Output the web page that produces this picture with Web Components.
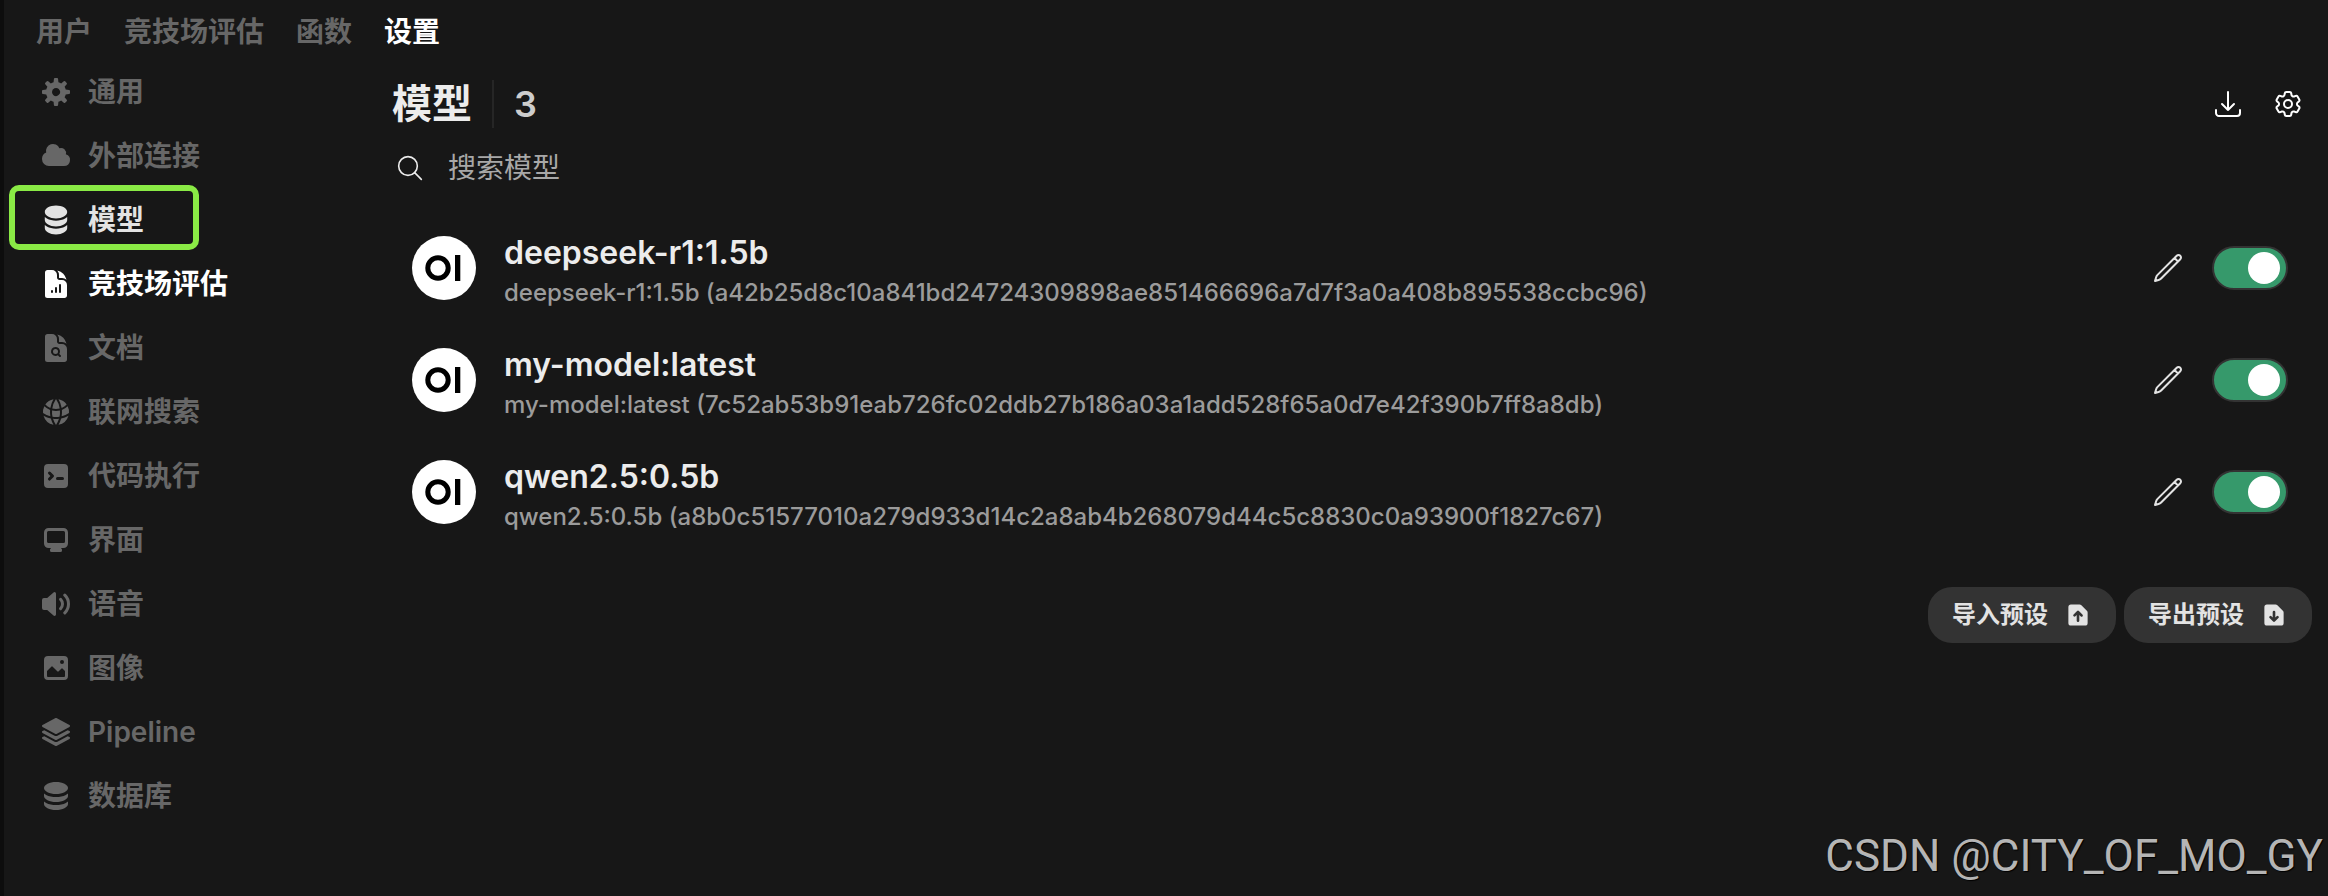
<!DOCTYPE html>
<html lang="zh-CN">
<head>
<meta charset="utf-8">
<title>设置</title>
<style>
	body {
		margin: 0;
		background: #171717;
		color: #ececec;
		font-family: Inter, "Noto Sans CJK SC", sans-serif;
		font-size: 28px;
		line-height: 40px;
	}
</style>
</head>
<body>

<admin-page>
	<top-nav slot="nav">
		<nav-tab>用户</nav-tab>
		<nav-tab>竞技场评估</nav-tab>
		<nav-tab>函数</nav-tab>
		<nav-tab active>设置</nav-tab>
	</top-nav>

	<side-nav slot="side">
		<side-item icon="cog">通用</side-item>
		<side-item icon="cloud">外部连接</side-item>
		<side-item icon="stack" active marked>模型</side-item>
		<side-item icon="chart" hover>竞技场评估</side-item>
		<side-item icon="doc">文档</side-item>
		<side-item icon="globe">联网搜索</side-item>
		<side-item icon="code">代码执行</side-item>
		<side-item icon="screen">界面</side-item>
		<side-item icon="audio">语音</side-item>
		<side-item icon="image">图像</side-item>
		<side-item icon="layers">Pipeline</side-item>
		<side-item icon="database">数据库</side-item>
	</side-nav>

	<panel-header count="3">模型</panel-header>
	<search-box placeholder="搜索模型"></search-box>
	<model-list>
		<model-row name="deepseek-r1:1.5b" digest="a42b25d8c10a841bd24724309898ae851466696a7d7f3a0a408b895538ccbc96"></model-row>
		<model-row name="my-model:latest" digest="7c52ab53b91eab726fc02ddb27b186a03a1add528f65a0d7e42f390b7ff8a8db"></model-row>
		<model-row name="qwen2.5:0.5b" digest="a8b0c51577010a279d933d14c2a8ab4b268079d44c5c8830c0a93900f1827c67"></model-row>
	</model-list>
	<preset-actions>
		<pill-button icon="upload">导入预设</pill-button>
		<pill-button icon="export">导出预设</pill-button>
	</preset-actions>

	<page-watermark slot="mark">CSDN @CITY_OF_MO_GY</page-watermark>
</admin-page>

<script>
const docBody = 'M5.625 1.5H9a3.75 3.75 0 0 1 3.75 3.75v1.875c0 1.036.84 1.875 1.875 1.875H16.5a3.75 3.75 0 0 1 3.75 3.75v7.875c0 1.035-.84 1.875-1.875 1.875H5.625a1.875 1.875 0 0 1-1.875-1.875V3.375c0-1.036.84-1.875 1.875-1.875Z'
const docFold = 'M14.25 5.25a5.23 5.23 0 0 0-1.279-3.434 9.768 9.768 0 0 1 6.963 6.963A5.23 5.23 0 0 0 16.5 7.5h-1.875a.375.375 0 0 1-.375-.375V5.25Z'
const fileBody = 'M4 2a1.5 1.5 0 0 0-1.5 1.5v9A1.5 1.5 0 0 0 4 14h8a1.5 1.5 0 0 0 1.5-1.5V6.621a1.5 1.5 0 0 0-.44-1.06L9.94 2.439A1.5 1.5 0 0 0 8.878 2H4Z'

// [viewBox size, shapes]
const solid = {
	cog: [16, '<path d="M6.955 1.45A.5.5 0 0 1 7.452 1h1.096a.5.5 0 0 1 .497.45l.17 1.699c.484.12.94.312 1.356.562l1.321-1.081a.5.5 0 0 1 .67.033l.774.775a.5.5 0 0 1 .034.67l-1.08 1.32c.25.417.44.873.561 1.357l1.699.17a.5.5 0 0 1 .45.497v1.096a.5.5 0 0 1-.45.497l-1.699.17c-.12.484-.312.94-.562 1.356l1.082 1.322a.5.5 0 0 1-.034.67l-.774.774a.5.5 0 0 1-.67.033l-1.322-1.08c-.416.25-.872.44-1.356.561l-.17 1.699a.5.5 0 0 1-.497.45H7.452a.5.5 0 0 1-.497-.45l-.17-1.699a4.973 4.973 0 0 1-1.356-.562L4.108 13.37a.5.5 0 0 1-.67-.033l-.774-.775a.5.5 0 0 1-.034-.67l1.08-1.32a4.971 4.971 0 0 1-.561-1.357l-1.699-.17A.5.5 0 0 1 1 8.548V7.452a.5.5 0 0 1 .45-.497l1.699-.17c.12-.484.312-.94.562-1.356L2.629 4.107a.5.5 0 0 1 .034-.67l.774-.774a.5.5 0 0 1 .67-.033L5.43 3.71a4.97 4.97 0 0 1 1.356-.561l.17-1.699ZM6 8c0 .538.212 1.026.558 1.385l.057.057a2 2 0 0 0 2.828-2.828l-.058-.056A2 2 0 0 0 6 8Z"/>'],
	cloud: [16, '<path d="M1 9.5A3.5 3.5 0 0 0 4.5 13H12a3 3 0 0 0 .917-5.857 2.503 2.503 0 0 0-3.198-3.019 3.5 3.5 0 0 0-6.628 2.171A3.5 3.5 0 0 0 1 9.5Z"/>'],
	stack: [20, '<path d="M10 1c3.866 0 7 1.79 7 4s-3.134 4-7 4-7-1.79-7-4 3.134-4 7-4Zm5.694 8.13c.464-.264.91-.583 1.306-.952V10c0 2.21-3.134 4-7 4s-7-1.79-7-4V8.178c.396.37.842.688 1.306.953C5.838 10.006 7.854 10.5 10 10.5s4.162-.494 5.694-1.37ZM3 13.179V15c0 2.21 3.134 4 7 4s7-1.79 7-4v-1.822c-.396.37-.842.688-1.306.953-1.532.875-3.548 1.369-5.694 1.369s-4.162-.494-5.694-1.37A7.009 7.009 0 0 1 3 13.179Z"/>'],
	chart: [24, `<path d="${docBody}M9.75 17.25a.75.75 0 0 0-1.5 0V18a.75.75 0 0 0 1.5 0v-.75Zm2.25-3a.75.75 0 0 1 .75.75v3a.75.75 0 0 1-1.5 0v-3a.75.75 0 0 1 .75-.75Zm3.75-1.5a.75.75 0 0 0-1.5 0V18a.75.75 0 0 0 1.5 0v-5.25Z"/><path d="${docFold}"/>`],
	doc: [24, `<path d="M11.625 16.5a1.875 1.875 0 1 0 0-3.75 1.875 1.875 0 0 0 0 3.75Z"/><path d="${docBody}m6 16.5c.66 0 1.277-.19 1.797-.518l1.048 1.048a.75.75 0 0 0 1.06-1.06l-1.047-1.048A3.375 3.375 0 1 0 11.625 18Z"/><path d="${docFold}"/>`],
	globe: [24, '<path d="M21.721 12.752a9.711 9.711 0 0 0-.945-5.003 12.754 12.754 0 0 1-4.339 2.708 18.991 18.991 0 0 1-.214 4.772 17.165 17.165 0 0 0 5.498-2.477ZM14.634 15.55a17.324 17.324 0 0 0 .332-4.647c-.952.227-1.945.347-2.966.347-1.021 0-2.014-.12-2.966-.347a17.515 17.515 0 0 0 .332 4.647 17.385 17.385 0 0 0 5.268 0ZM9.772 17.119a18.963 18.963 0 0 0 4.456 0A17.182 17.182 0 0 1 12 21.724a17.18 17.18 0 0 1-2.228-4.605ZM7.777 15.23a18.87 18.87 0 0 1-.214-4.774 12.753 12.753 0 0 1-4.34-2.708 9.711 9.711 0 0 0-.944 5.004 17.165 17.165 0 0 0 5.498 2.477ZM21.356 14.752a9.765 9.765 0 0 1-7.478 6.817 18.64 18.64 0 0 0 1.988-4.718 18.627 18.627 0 0 0 5.49-2.098ZM2.644 14.752c1.682.971 3.53 1.688 5.49 2.099a18.64 18.64 0 0 0 1.988 4.718 9.765 9.765 0 0 1-7.478-6.816ZM13.878 2.43a9.755 9.755 0 0 1 6.116 3.986 11.267 11.267 0 0 1-3.746 2.504 18.63 18.63 0 0 0-2.37-6.49ZM12 2.276a17.152 17.152 0 0 1 2.805 7.121c-.897.23-1.837.353-2.805.353-.968 0-1.908-.122-2.805-.353A17.151 17.151 0 0 1 12 2.276ZM10.122 2.43a18.629 18.629 0 0 0-2.37 6.49 11.266 11.266 0 0 1-3.746-2.504 9.754 9.754 0 0 1 6.116-3.985Z"/>'],
	code: [16, '<path d="M2 4a2 2 0 0 1 2-2h8a2 2 0 0 1 2 2v8a2 2 0 0 1-2 2H4a2 2 0 0 1-2-2V4Zm2.22 1.97a.75.75 0 0 0 0 1.06l.97.97-.97.97a.75.75 0 1 0 1.06 1.06l1.5-1.5a.75.75 0 0 0 0-1.06l-1.5-1.5a.75.75 0 0 0-1.06 0ZM8.75 8.5a.75.75 0 0 0 0 1.5h2.5a.75.75 0 0 0 0-1.5h-2.5Z"/>'],
	screen: [16, '<path d="M2 4.25A2.25 2.25 0 0 1 4.25 2h7.5A2.25 2.25 0 0 1 14 4.25v5.5A2.25 2.25 0 0 1 11.75 12h-1.312c.1.128.21.248.328.36a.75.75 0 0 1 .234.545v.345a.75.75 0 0 1-.75.75h-4.5a.75.75 0 0 1-.75-.75v-.345a.75.75 0 0 1 .234-.545c.118-.111.228-.232.328-.36H4.25A2.25 2.25 0 0 1 2 9.75v-5.5Zm2.25-.75a.75.75 0 0 0-.75.75v4.5c0 .414.336.75.75.75h7.5a.75.75 0 0 0 .75-.75v-4.5a.75.75 0 0 0-.75-.75h-7.5Z"/>'],
	audio: [16, '<path d="M7.557 2.066A.75.75 0 0 1 8 2.75v10.5a.75.75 0 0 1-1.248.56L3.59 11H2a1 1 0 0 1-1-1V6a1 1 0 0 1 1-1h1.59l3.162-2.81a.75.75 0 0 1 .805-.124ZM12.95 3.05a.75.75 0 1 0-1.06 1.06 5.5 5.5 0 0 1 0 7.78.75.75 0 1 0 1.06 1.06 7 7 0 0 0 0-9.9Z"/><path d="M10.828 5.172a.75.75 0 1 0-1.06 1.06 2.5 2.5 0 0 1 0 3.536.75.75 0 1 0 1.06 1.06 4 4 0 0 0 0-5.656Z"/>'],
	image: [16, '<path d="M2 4a2 2 0 0 1 2-2h8a2 2 0 0 1 2 2v8a2 2 0 0 1-2 2H4a2 2 0 0 1-2-2V4Zm10.5 5.707a.5.5 0 0 0-.146-.353l-1-1a.5.5 0 0 0-.708 0L9.354 9.646a.5.5 0 0 1-.708 0L6.354 7.354a.5.5 0 0 0-.708 0l-2 2a.5.5 0 0 0-.146.353V12a.5.5 0 0 0 .5.5h8a.5.5 0 0 0 .5-.5V9.707ZM12 5a1 1 0 1 1-2 0 1 1 0 0 1 2 0Z"/>'],
	layers: [24, '<path d="M11.644 1.59a.75.75 0 0 1 .712 0l9.75 5.25a.75.75 0 0 1 0 1.32l-9.75 5.25a.75.75 0 0 1-.712 0l-9.75-5.25a.75.75 0 0 1 0-1.32l9.75-5.25Z"/><path d="m3.265 10.602 7.668 4.129a2.25 2.25 0 0 0 2.134 0l7.668-4.13 1.37.739a.75.75 0 0 1 0 1.32l-9.75 5.25a.75.75 0 0 1-.71 0l-9.75-5.25a.75.75 0 0 1 0-1.32l1.37-.738Z"/><path d="m10.933 19.231-7.668-4.13-1.37.739a.75.75 0 0 0 0 1.32l9.75 5.25c.221.12.489.12.71 0l9.75-5.25a.75.75 0 0 0 0-1.32l-1.37-.738-7.668 4.13a2.25 2.25 0 0 1-2.134-.001Z"/>'],
	database: [16, '<path d="M8 7c3.314 0 6-1.343 6-3s-2.686-3-6-3-6 1.343-6 3 2.686 3 6 3Z"/><path d="M8 8.5c1.84 0 3.579-.37 4.914-1.037A6.33 6.33 0 0 0 14 6.78V8c0 1.657-2.686 3-6 3S2 9.657 2 8V6.78c.346.273.72.5 1.087.683C4.42 8.131 6.16 8.5 8 8.5Z"/><path d="M8 12.5c1.84 0 3.579-.37 4.914-1.037.366-.183.74-.41 1.086-.684V12c0 1.657-2.686 3-6 3s-6-1.343-6-3v-1.22c.346.273.72.5 1.087.683C4.42 12.131 6.16 12.5 8 12.5Z"/>'],
	upload: [16, `<path d="${fileBody}M8 12a.75.75 0 0 1-.75-.75V8.06l-.72.72a.75.75 0 0 1-1.06-1.06l2-2a.75.75 0 0 1 1.06 0l2 2a.75.75 0 1 1-1.06 1.06l-.72-.72v3.19A.75.75 0 0 1 8 12Z"/>`],
	export: [16, `<path d="${fileBody}M8 5.5a.75.75 0 0 1 .75.75v3.19l.72-.72a.75.75 0 1 1 1.06 1.06l-2 2a.75.75 0 0 1-1.06 0l-2-2a.75.75 0 0 1 1.06-1.06l.72.72V6.25A.75.75 0 0 1 8 5.5Z"/>`]
}

const outline = {
	search: '<circle cx="10.5" cy="10.5" r="7"/><path d="m15.5 15.5 5 5"/>',
	download: '<path d="M3 16.5v2.25A2.25 2.25 0 0 0 5.25 21h13.5A2.25 2.25 0 0 0 21 18.75V16.5M16.5 12 12 16.5m0 0L7.5 12m4.5 4.5V3"/>',
	pencil: '<path d="m16.862 4.487 1.687-1.688a1.875 1.875 0 1 1 2.652 2.652L6.832 19.82a4.5 4.5 0 0 1-1.897 1.13l-2.685.8.8-2.685a4.5 4.5 0 0 1 1.13-1.897L16.863 4.487Zm0 0L19.5 7.125"/>',
	settings: '<path d="M9.594 3.94c.09-.542.56-.94 1.11-.94h2.593c.55 0 1.02.398 1.11.94l.213 1.281c.063.374.313.686.645.87.074.04.147.083.22.127.325.196.72.257 1.075.124l1.217-.456a1.125 1.125 0 0 1 1.37.49l1.296 2.247a1.125 1.125 0 0 1-.26 1.431l-1.003.827c-.293.241-.438.613-.43.992a7.723 7.723 0 0 1 0 .255c-.008.378.137.75.43.991l1.004.827c.424.35.534.955.26 1.43l-1.298 2.247a1.125 1.125 0 0 1-1.369.491l-1.217-.456c-.355-.133-.75-.072-1.076.124a6.47 6.47 0 0 1-.22.128c-.331.183-.581.495-.644.869l-.213 1.281c-.09.543-.56.94-1.11.94h-2.594c-.55 0-1.019-.398-1.11-.94l-.213-1.281c-.062-.374-.312-.686-.644-.87a6.52 6.52 0 0 1-.22-.127c-.325-.196-.72-.257-1.076-.124l-1.217.456a1.125 1.125 0 0 1-1.369-.49l-1.297-2.247a1.125 1.125 0 0 1 .26-1.431l1.004-.827c.292-.24.437-.613.43-.991a6.932 6.932 0 0 1 0-.255c.007-.38-.138-.751-.43-.992l-1.004-.827a1.125 1.125 0 0 1-.26-1.43l1.297-2.247a1.125 1.125 0 0 1 1.37-.491l1.216.456c.356.133.751.072 1.076-.124.072-.044.146-.086.22-.128.332-.183.582-.495.644-.869l.214-1.28Z"/><circle cx="12" cy="12" r="3"/>'
}

function icon(name) {
	if (solid[name]) {
		const [size, shapes] = solid[name]
		return `<svg viewBox="0 0 ${size} ${size}" fill="currentColor" fill-rule="evenodd" aria-hidden="true">${shapes}</svg>`
	}
	return `<svg viewBox="0 0 24 24" fill="none" stroke="currentColor" stroke-width="1.5" stroke-linecap="round" stroke-linejoin="round" aria-hidden="true">${outline[name]}</svg>`
}

class BaseElement extends HTMLElement {
	constructor() {
		super()
		this.attachShadow({ mode: 'open' })
	}

	connectedCallback() {
		this.shadowRoot.innerHTML = this.render()
	}
}

class AdminPage extends BaseElement {
	render() {
		return `
			<style>
				:host {
					display: block;
					position: relative;
					box-sizing: border-box;
					min-height: 100vh;
					border-left: 4px solid #0d0d0d;
				}
				.body {
					display: grid;
					grid-template-columns: 320px 1fr;
					gap: 32px;
					padding: 0 16px 0 36px;
				}
				main { padding-top: 16px; }
			</style>
			<slot name="nav"></slot>
			<div class="body">
				<slot name="side"></slot>
				<main><slot></slot></main>
			</div>
			<slot name="mark"></slot>
		`
	}
}

class TopNav extends BaseElement {
	render() {
		return `
			<style>
				:host { display: block; }
				nav {
					display: flex;
					gap: 32px;
					padding: 12px 32px 8px;
				}
			</style>
			<nav><slot></slot></nav>
		`
	}
}

class NavTab extends BaseElement {
	render() {
		return `
			<style>
				:host { display: block; font-weight: 600; }
				a { color: #676767; text-decoration: none; }
				:host([active]) a { color: #fff; }
			</style>
			<a href="#"><slot></slot></a>
		`
	}
}

class SideNav extends BaseElement {
	render() {
		return `
			<style>
				:host { display: block; }
				nav { display: flex; flex-direction: column; }
			</style>
			<nav><slot></slot></nav>
		`
	}
}

class SideItem extends BaseElement {
	render() {
		return `
			<style>
				:host { display: block; position: relative; font-weight: 600; }
				a {
					display: flex;
					align-items: center;
					gap: 16px;
					padding: 12px 0;
					color: #676767;
					text-decoration: none;
				}
				:host([active]) a { color: #e3e3e3; }
				:host([hover]) a { color: #fff; }
				svg { width: 32px; height: 32px; }
				/* highlight frame drawn over the item */
				:host([marked])::after {
					content: "";
					position: absolute;
					left: -31px;
					top: -3px;
					width: 178px;
					height: 53px;
					border: 6px solid #8aea45;
					border-radius: 10px;
					pointer-events: none;
				}
			</style>
			<a href="#">${icon(this.getAttribute('icon'))}<span><slot></slot></span></a>
		`
	}
}

class PanelHeader extends BaseElement {
	render() {
		return `
			<style>
				:host {
					display: flex;
					align-items: center;
					justify-content: space-between;
					padding: 4px 8px 4px 0;
				}
				.title { display: flex; align-items: center; }
				h1 { margin: 0; font-size: 40px; line-height: 48px; font-weight: 600; }
				.line { width: 2px; height: 48px; margin: 0 20px; background: #262626; }
				.count { font-size: 36px; line-height: 48px; font-weight: 600; color: #cdcdcd; }
				.actions { display: flex; gap: 28px; }
				button { padding: 0; border: 0; background: none; color: #fff; }
				svg { display: block; width: 32px; height: 32px; }
			</style>
			<div class="title">
				<h1><slot></slot></h1>
				<div class="line"></div>
				<span class="count">${this.getAttribute('count')}</span>
			</div>
			<div class="actions">
				<button aria-label="导入">${icon('download')}</button>
				<button aria-label="管理">${icon('settings')}</button>
			</div>
		`
	}
}

class SearchBox extends BaseElement {
	render() {
		const placeholder = this.getAttribute('placeholder')
		return `
			<style>
				:host { display: block; }
				label {
					display: flex;
					align-items: center;
					gap: 22px;
					padding: 16px 0 20px 2px;
				}
				svg { width: 32px; height: 32px; stroke-width: 1.2; }
				input {
					flex: 1;
					height: 40px;
					padding: 0;
					border: 0;
					outline: none;
					background: none;
					color: inherit;
					font: inherit;
				}
				input::placeholder { color: #a8a8a8; opacity: 1; }
			</style>
			<label>${icon('search')}<input type="text" aria-label="${placeholder}" placeholder="${placeholder}"></label>
		`
	}
}

class ModelList extends BaseElement {
	render() {
		return `
			<style>
				:host { display: flex; flex-direction: column; gap: 14px; padding-top: 11px; }
			</style>
			<slot></slot>
		`
	}
}

class ModelRow extends BaseElement {
	render() {
		const name = this.getAttribute('name')
		return `
			<style>
				:host {
					display: flex;
					align-items: center;
					gap: 28px;
					padding: 8px 24px 8px 20px;
				}
				.avatar { flex: none; width: 64px; height: 64px; }
				.info { flex: 1; min-width: 0; padding-top: 2px; }
				.name { font-size: 32px; line-height: 48px; font-weight: 600; }
				.id { font-size: 24px; line-height: 32px; font-weight: 500; color: #9b9b9b; }
				button { padding: 0; border: 0; background: none; color: #e3e3e3; }
				button svg { display: block; width: 32px; height: 32px; }
				.actions { display: flex; align-items: center; gap: 28px; }
				input {
					appearance: none;
					display: flex;
					align-items: center;
					justify-content: flex-end;
					box-sizing: border-box;
					width: 76px;
					height: 44px;
					margin: 0;
					padding: 0 6px;
					border: 2px solid #333;
					border-radius: 22px;
					background: #36996b;
				}
				input::before {
					content: "";
					width: 32px;
					height: 32px;
					border-radius: 50%;
					background: #fff;
				}
				input:not(:checked) { justify-content: flex-start; background: #262626; }
			</style>
			<svg class="avatar" viewBox="0 0 64 64" role="img" aria-label="logo">
				<circle cx="32" cy="32" r="32" fill="#fff"/>
				<circle cx="26" cy="32" r="10.2" fill="none" stroke="#000" stroke-width="5"/>
				<rect x="43" y="19" width="5.3" height="26"/>
			</svg>
			<div class="info">
				<div class="name">${name}</div>
				<div class="id">${name} (${this.getAttribute('digest')})</div>
			</div>
			<div class="actions">
				<button aria-label="编辑">${icon('pencil')}</button>
				<input type="checkbox" role="switch" aria-label="${name}" checked>
			</div>
		`
	}
}

class PresetActions extends BaseElement {
	render() {
		return `
			<style>
				:host {
					display: flex;
					justify-content: flex-end;
					gap: 8px;
					padding-top: 46px;
				}
			</style>
			<slot></slot>
		`
	}
}

class PillButton extends BaseElement {
	render() {
		return `
			<style>
				:host { display: block; }
				button {
					display: flex;
					align-items: center;
					gap: 16px;
					padding: 12px 24px;
					border: 0;
					border-radius: 24px;
					background: #333;
					color: #e3e3e3;
					font: inherit;
					font-size: 24px;
					line-height: 32px;
					font-weight: 600;
				}
				svg { width: 28px; height: 28px; }
			</style>
			<button><slot></slot>${icon(this.getAttribute('icon'))}</button>
		`
	}
}

class PageWatermark extends BaseElement {
	render() {
		return `
			<style>
				:host {
					position: absolute;
					right: 5px;
					bottom: 16px;
					font-family: Roboto, sans-serif;
					font-size: 44px;
					line-height: 48px;
					color: #b5b5b5;
					text-shadow: 1px 1px 1px #000;
				}
			</style>
			<slot></slot>
		`
	}
}

customElements.define('admin-page', AdminPage)
customElements.define('top-nav', TopNav)
customElements.define('nav-tab', NavTab)
customElements.define('side-nav', SideNav)
customElements.define('side-item', SideItem)
customElements.define('panel-header', PanelHeader)
customElements.define('search-box', SearchBox)
customElements.define('model-list', ModelList)
customElements.define('model-row', ModelRow)
customElements.define('preset-actions', PresetActions)
customElements.define('pill-button', PillButton)
customElements.define('page-watermark', PageWatermark)
</script>
</body>
</html>
